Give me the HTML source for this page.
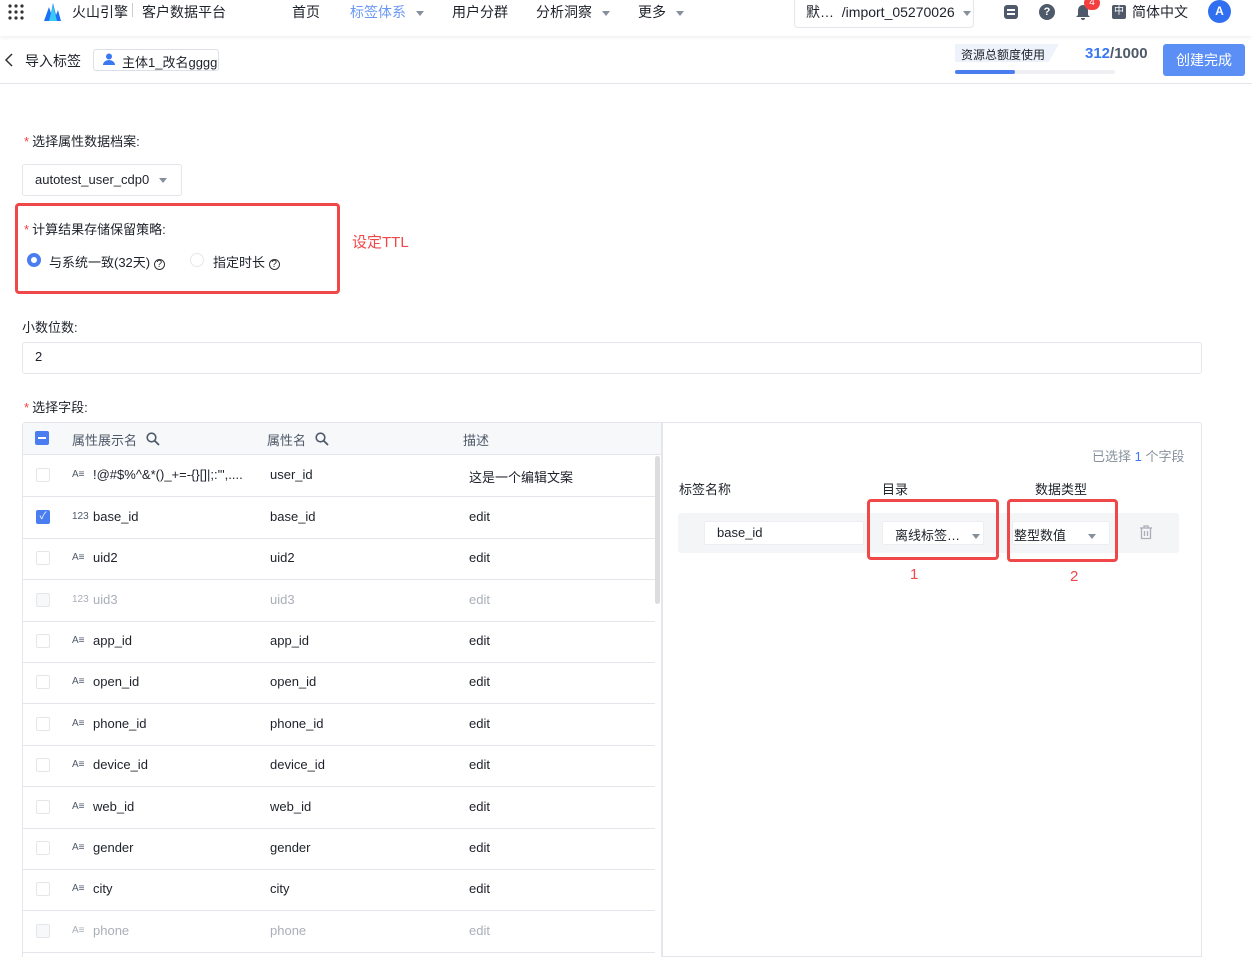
<!DOCTYPE html>
<html><head><meta charset="utf-8"><style>
*{box-sizing:border-box;margin:0;padding:0}
body{width:1252px;height:978px;overflow:hidden;background:#fff;font-family:"Liberation Sans","Noto Sans CJK SC",sans-serif;font-size:13px;color:#1d2129;position:relative}
.a{position:absolute;white-space:nowrap}
.req{color:#f53f3f;margin-right:3px}
.tri{display:inline-block;width:0;height:0;border-left:4px solid transparent;border-right:4px solid transparent;border-top:5px solid #86909c;vertical-align:middle}
.red{position:absolute;border:3px solid #f04848;border-radius:4px}
.row{position:absolute;left:23px;width:632px;height:41.5px;border-bottom:1px solid #e5e6eb}
.cb{position:absolute;left:13px;top:13px;width:14px;height:14px;border:1px solid #e5e6eb;border-radius:2px;background:#fff}
.ic{position:absolute;left:49px;top:14px;font-size:10px;color:#4e5969}
.c1{position:absolute;left:70px;top:12px}
.c2{position:absolute;left:247px;top:12px}
.c3{position:absolute;left:446px;top:12px}
.dis{color:#a9aeb8}
</style></head><body>
<div class="a" style="left:0;top:0;width:1252px;height:36px;background:#fff;box-shadow:0 2px 4px rgba(0,0,0,.06)"></div>
<svg class="a" style="left:8px;top:4px" width="16" height="16"><g fill="#333"><circle cx="2" cy="2" r="1.6"/><circle cx="8" cy="2" r="1.6"/><circle cx="14" cy="2" r="1.6"/><circle cx="2" cy="8" r="1.6"/><circle cx="8" cy="8" r="1.6"/><circle cx="14" cy="8" r="1.6"/><circle cx="2" cy="14" r="1.6"/><circle cx="8" cy="14" r="1.6"/><circle cx="14" cy="14" r="1.6"/></g></svg>
<svg class="a" style="left:42px;top:1px" width="20" height="20"><path d="M2 20 L7 6 L9 12 L11 2 L14 14 L16 9 L19 20Z" fill="#1e6ff5"/><path d="M7 20 L11 4 L15 20Z" fill="#38c9f5"/></svg>
<div class="a" style="left:72px;top:2px;font-size:14px">火山引擎</div>
<div class="a" style="left:132px;top:3px;width:1px;height:14px;background:#ccc"></div>
<div class="a" style="left:142px;top:2px;font-size:14px">客户数据平台</div>
<div class="a" style="left:292px;top:2px;font-size:14px">首页</div>
<div class="a" style="left:350px;top:2px;font-size:14px;color:#6b97f5">标签体系 <span class="tri" style="margin-left:6px"></span></div>
<div class="a" style="left:452px;top:2px;font-size:14px">用户分群</div>
<div class="a" style="left:536px;top:2px;font-size:14px">分析洞察 <span class="tri" style="margin-left:6px"></span></div>
<div class="a" style="left:638px;top:2px;font-size:14px">更多 <span class="tri" style="margin-left:6px"></span></div>
<div class="a" style="left:794px;top:-2px;width:180px;height:30px;border:1px solid #e5e6eb;border-top:none;border-radius:0 0 4px 4px"></div>
<div class="a" style="left:806px;top:2px;font-size:14px">默…&nbsp;&nbsp;/import_05270026 <span class="tri" style="margin-left:4px"></span></div>
<div class="a" style="left:1004px;top:5px;width:14px;height:14px;background:#4e5969;border-radius:3px"><div style="position:absolute;left:3px;top:4px;width:8px;height:1.5px;background:#fff"></div><div style="position:absolute;left:3px;top:8px;width:8px;height:1.5px;background:#fff"></div></div>
<div class="a" style="left:1039px;top:4px;width:16px;height:16px;background:#4e5969;border-radius:50%;color:#fff;font-size:11px;font-weight:bold;text-align:center;line-height:16px">?</div>
<svg class="a" style="left:1075px;top:4px" width="16" height="16"><path d="M8 1a5 5 0 0 0-5 5v5l-2 2h14l-2-2V6a5 5 0 0 0-5-5z M6 14h4a2 2 0 0 1-4 0z" fill="#4e5969"/></svg>
<div class="a" style="left:1084px;top:-4px;width:16px;height:14px;background:#f53f3f;border-radius:7px;color:#fff;font-size:10px;text-align:center;line-height:14px">4</div>
<div class="a" style="left:1112px;top:5px;width:14px;height:14px;background:#4e5969;border-radius:2px;color:#fff;font-size:10px;text-align:center;line-height:14px">中</div>
<div class="a" style="left:1132px;top:2px;font-size:14px">简体中文</div>
<div class="a" style="left:1208px;top:0;width:23px;height:23px;background:#2f6ff0;border-radius:50%;color:#fff;font-size:12px;font-weight:bold;text-align:center;line-height:23px">A</div>
<svg class="a" style="left:4px;top:53px" width="10" height="14"><path d="M8 1 L2 7 L8 13" stroke="#333" stroke-width="1.5" fill="none"/></svg>
<div class="a" style="left:25px;top:51px;font-size:14px">导入标签</div>
<div class="a" style="left:93px;top:49px;width:126px;height:22px;border:1px solid #dcdfe6;border-radius:3px"></div>
<svg class="a" style="left:103px;top:53px" width="12" height="12"><circle cx="6" cy="3.5" r="3" fill="#3a78f2"/><path d="M0 12 a6 5 0 0 1 12 0z" fill="#3a78f2"/></svg>
<div class="a" style="left:122px;top:52px;font-size:13px">主体1_改名gggg</div>
<div class="a" style="left:0;top:83px;width:1252px;height:1px;background:#e5e6eb"></div>
<div class="a" style="left:955px;top:44px;width:104px;height:18px;background:#eef3fb;clip-path:polygon(0 0,100% 0,90% 100%,0 100%)"></div>
<div class="a" style="left:961px;top:46px;font-size:12px">资源总额度使用</div>
<div class="a" style="left:955px;top:70px;width:160px;height:4px;background:#eef0f3;border-radius:2px"></div>
<div class="a" style="left:955px;top:70px;width:60px;height:4px;background:#4a7ef0;border-radius:2px"></div>
<div class="a" style="left:1085px;top:45px;font-size:15px;font-weight:bold;color:#4e5969"><span style="color:#3a78f2">312</span>/1000</div>
<div class="a" style="left:1163px;top:44px;width:82px;height:32px;background:#5b8ff5;border-radius:3px;color:#fff;font-size:14px;text-align:center;line-height:32px">创建完成</div>
<div class="a" style="left:24px;top:131px"><span class="req">*</span>选择属性数据档案:</div>
<div class="a" style="left:22px;top:164px;width:160px;height:32px;border:1px solid #e5e6eb;border-radius:3px"></div>
<div class="a" style="left:35px;top:172px">autotest_user_cdp0 <span class="tri" style="margin-left:6px"></span></div>
<div class="red" style="left:15px;top:203px;width:325px;height:91px"></div>
<div class="a" style="left:24px;top:219px"><span class="req">*</span>计算结果存储保留策略:</div>
<div class="a" style="left:27px;top:253px;width:14px;height:14px;border-radius:50%;border:4px solid #4a7ef0;background:#fff"></div>
<div class="a" style="left:49px;top:252px">与系统一致(32天) <span style="font-size:10px;border:1px solid #333;border-radius:50%;display:inline-block;width:11px;height:11px;line-height:9px;text-align:center">?</span></div>
<div class="a" style="left:190px;top:253px;width:14px;height:14px;border-radius:50%;border:1px solid #e5e6eb"></div>
<div class="a" style="left:213px;top:252px">指定时长 <span style="font-size:10px;border:1px solid #333;border-radius:50%;display:inline-block;width:11px;height:11px;line-height:9px;text-align:center">?</span></div>
<div class="a" style="left:352px;top:231px;font-size:15px;color:#f04848">设定TTL</div>
<div class="a" style="left:22px;top:317px">小数位数:</div>
<div class="a" style="left:22px;top:342px;width:1180px;height:32px;border:1px solid #e5e6eb;border-radius:3px"></div>
<div class="a" style="left:35px;top:349px">2</div>
<div class="a" style="left:24px;top:397px"><span class="req">*</span>选择字段:</div>
<div class="a" style="left:22px;top:422px;width:640px;height:535px;border:1px solid #e5e6eb;border-bottom:none;border-radius:3px 0 0 0"></div>
<div class="a" style="left:23px;top:423px;width:638px;height:32px;background:#f7f8fa;border-bottom:1px solid #e5e6eb"></div>
<div class="a" style="left:35px;top:431px;width:14px;height:14px;background:#4a7ef0;border-radius:2px"><div style="position:absolute;left:3px;top:6px;width:8px;height:2px;background:#fff"></div></div>
<div class="a" style="left:72px;top:430px;color:#4e5969">属性展示名</div>
<svg class="a" style="left:146px;top:432px" width="14" height="14"><circle cx="5.5" cy="5.5" r="4.3" stroke="#4e5969" stroke-width="1.6" fill="none"/><path d="M8.7 8.7L13 13" stroke="#4e5969" stroke-width="1.8"/></svg>
<div class="a" style="left:267px;top:430px;color:#4e5969">属性名</div>
<svg class="a" style="left:315px;top:432px" width="14" height="14"><circle cx="5.5" cy="5.5" r="4.3" stroke="#4e5969" stroke-width="1.6" fill="none"/><path d="M8.7 8.7L13 13" stroke="#4e5969" stroke-width="1.8"/></svg>
<div class="a" style="left:463px;top:430px;color:#4e5969">描述</div>
<div class="a" style="left:655px;top:456px;width:5px;height:148px;background:#dcdcdc;border-radius:3px"></div>

<div class="row" style="top:455px"><div class="cb"></div><div class="ic">A≡</div><div class="c1">!@#$%^&amp;*()_+=-{}[]|;:'",....</div><div class="c2">user_id</div><div class="c3">这是一个编辑文案</div></div>
<div class="row" style="top:497px"><div class="cb" style="background:#4a7ef0;border-color:#4a7ef0;color:#fff;font-size:10px;text-align:center;line-height:12px">✓</div><div class="ic">123</div><div class="c1">base_id</div><div class="c2">base_id</div><div class="c3">edit</div></div>
<div class="row" style="top:538px"><div class="cb"></div><div class="ic">A≡</div><div class="c1">uid2</div><div class="c2">uid2</div><div class="c3">edit</div></div>
<div class="row dis" style="top:580px"><div class="cb" style="background:#f7f8fa"></div><div class="ic dis">123</div><div class="c1">uid3</div><div class="c2">uid3</div><div class="c3">edit</div></div>
<div class="row" style="top:621px"><div class="cb"></div><div class="ic">A≡</div><div class="c1">app_id</div><div class="c2">app_id</div><div class="c3">edit</div></div>
<div class="row" style="top:662px"><div class="cb"></div><div class="ic">A≡</div><div class="c1">open_id</div><div class="c2">open_id</div><div class="c3">edit</div></div>
<div class="row" style="top:704px"><div class="cb"></div><div class="ic">A≡</div><div class="c1">phone_id</div><div class="c2">phone_id</div><div class="c3">edit</div></div>
<div class="row" style="top:745px"><div class="cb"></div><div class="ic">A≡</div><div class="c1">device_id</div><div class="c2">device_id</div><div class="c3">edit</div></div>
<div class="row" style="top:787px"><div class="cb"></div><div class="ic">A≡</div><div class="c1">web_id</div><div class="c2">web_id</div><div class="c3">edit</div></div>
<div class="row" style="top:828px"><div class="cb"></div><div class="ic">A≡</div><div class="c1">gender</div><div class="c2">gender</div><div class="c3">edit</div></div>
<div class="row" style="top:869px"><div class="cb"></div><div class="ic">A≡</div><div class="c1">city</div><div class="c2">city</div><div class="c3">edit</div></div>
<div class="row dis" style="top:911px"><div class="cb" style="background:#f7f8fa"></div><div class="ic dis">A≡</div><div class="c1">phone</div><div class="c2">phone</div><div class="c3">edit</div></div>
<div class="a" style="left:662px;top:422px;width:540px;height:535px;border:1px solid #e5e6eb;border-radius:0 3px 0 0"></div>
<div class="a" style="left:1092px;top:446px;color:#86909c">已选择 <span style="color:#3a78f2">1</span> 个字段</div>
<div class="a" style="left:679px;top:479px">标签名称</div>
<div class="a" style="left:882px;top:479px">目录</div>
<div class="a" style="left:1035px;top:479px">数据类型</div>
<div class="a" style="left:678px;top:513px;width:501px;height:40px;background:#f4f5f7;border-radius:3px"></div>
<div class="a" style="left:704px;top:521px;width:160px;height:24px;background:#fff;border:1px solid #eceef2;border-radius:2px;padding:3px 12px">base_id</div>
<div class="a" style="left:882px;top:521px;width:102px;height:24px;background:#fff;border:1px solid #eceef2;border-radius:2px;padding:3px 12px">离线标签… <span class="tri" style="margin-left:8px"></span></div>
<div class="a" style="left:1012px;top:521px;width:98px;height:24px;background:#fff;border:1px solid #eceef2;border-radius:2px;padding:3px 1px">整型数值 <span class="tri" style="margin-left:18px"></span></div>
<svg class="a" style="left:1139px;top:525px" width="14" height="15"><path d="M1 3h12M5 3V1h4v2M2.5 3.5v10h9v-10M5.5 6v5M8.5 6v5" stroke="#a9aeb8" stroke-width="1.3" fill="none"/></svg>
<div class="red" style="left:867px;top:499px;width:132px;height:61px"></div>
<div class="red" style="left:1007px;top:499px;width:111px;height:63px"></div>
<div class="a" style="left:910px;top:566px;font-size:15px;color:#f04848">1</div>
<div class="a" style="left:1070px;top:568px;font-size:15px;color:#f04848">2</div>
</body></html>
